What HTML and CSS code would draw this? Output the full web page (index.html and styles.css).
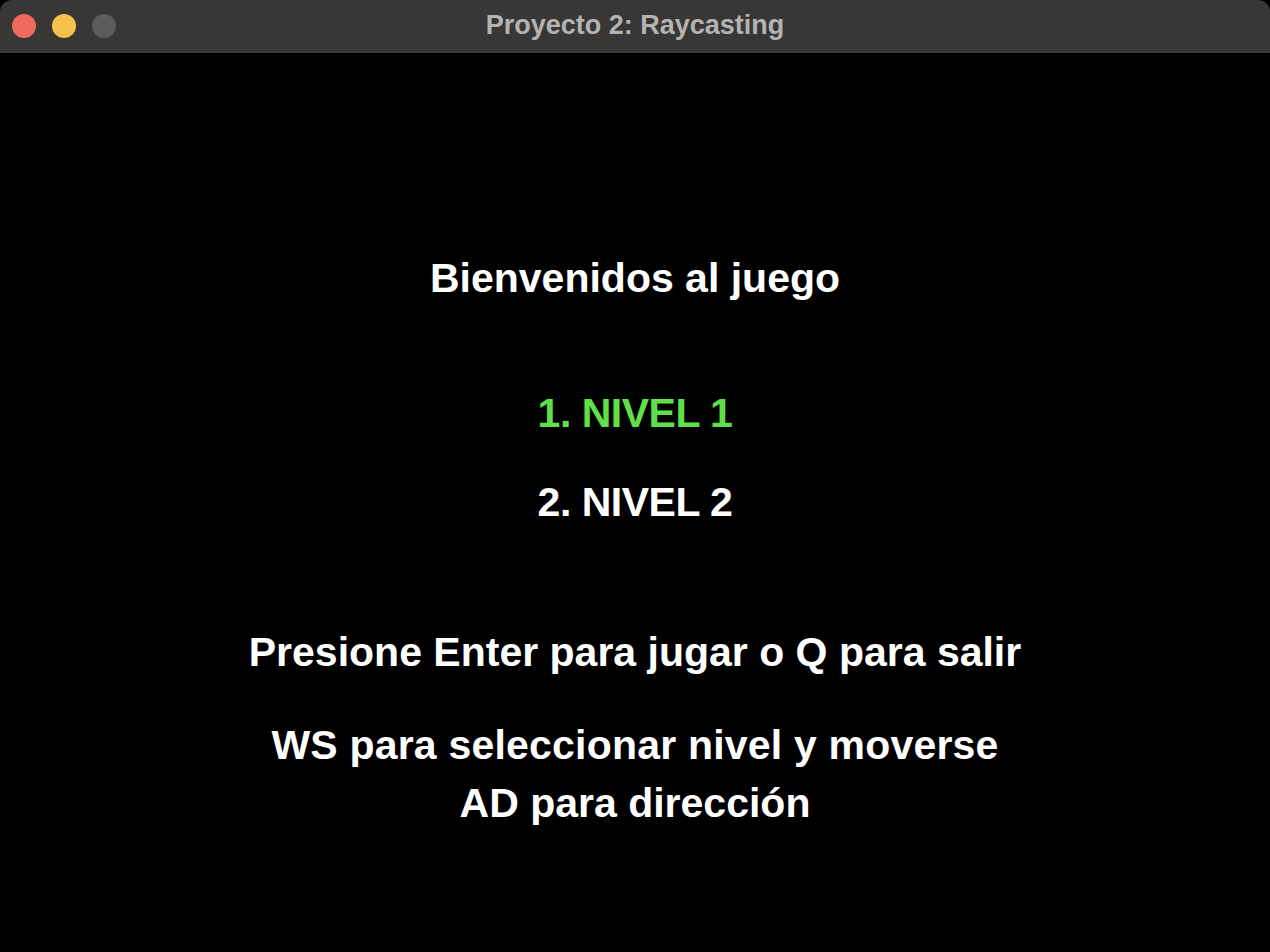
FILE: index.html
```html
<!DOCTYPE html>
<html lang="es">
<head>
<meta charset="utf-8">
<title>Proyecto 2: Raycasting</title>
<link rel="stylesheet" href="styles.css">
</head>
<body>
<div class="window">
  <header class="titlebar">
    <div class="lights">
      <span class="light red"></span>
      <span class="light yellow"></span>
      <span class="light grey"></span>
    </div>
    <div class="title">Proyecto 2: Raycasting</div>
  </header>
  <main class="screen">
    <p class="line welcome">Bienvenidos al juego</p>
    <p class="line level selected">1. NIVEL 1</p>
    <p class="line level second">2. NIVEL 2</p>
    <p class="line hint">Presione Enter para jugar o Q para salir</p>
    <p class="line help">WS para seleccionar nivel y moverse</p>
    <p class="line help2">AD para dirección</p>
  </main>
</div>
</body>
</html>
```

FILE: styles.css
```css
html, body {
  margin: 0;
  padding: 0;
  background: #000;
}
.window {
  width: 1270px;
  height: 952px;
  background: #000;
  border-radius: 12px;
  overflow: hidden;
  display: flex;
  flex-direction: column;
}
.titlebar {
  height: 53px;
  background: #383735;
  position: relative;
  display: flex;
  align-items: center;
  justify-content: center;
  flex: none;
}
.lights {
  position: absolute;
  left: 12px;
  top: 14px;
  display: flex;
  gap: 16px;
}
.light {
  width: 24px;
  height: 24px;
  border-radius: 50%;
  display: block;
}
.red { background: #ef6a5e; }
.yellow { background: #f5c14d; }
.grey { background: #5d5c5a; }
.title {
  font-family: "Liberation Sans", Arial, sans-serif;
  font-weight: bold;
  font-size: 27px;
  color: #b4b3b1;
  padding-bottom: 2px;
}
.screen {
  flex: 1;
  display: flex;
  flex-direction: column;
  align-items: center;
  padding-top: 196px;
}
.line {
  margin: 0;
  font-family: "Liberation Sans", Arial, sans-serif;
  font-weight: bold;
  font-size: 41px;
  line-height: 58px;
  color: #ffffff;
  white-space: nowrap;
}
.level { letter-spacing: -0.5px; }
.selected { color: #5fe04b; margin-top: 77px; }
.second { margin-top: 31px; }
.hint { margin-top: 92px; }
.help { margin-top: 35px; letter-spacing: 0.2px; }
```
